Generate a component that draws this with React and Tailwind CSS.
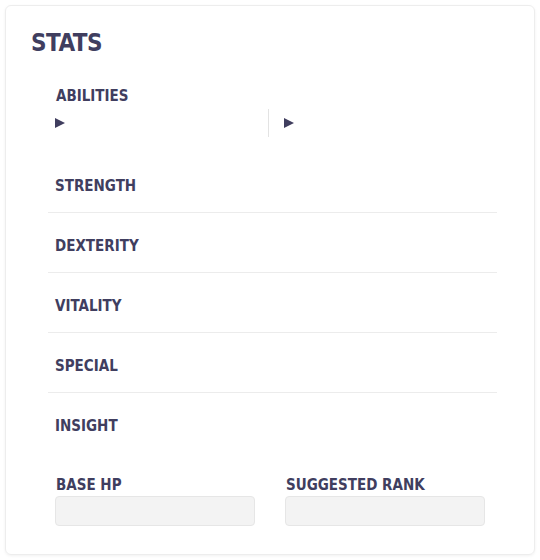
const stats = ["STRENGTH", "DEXTERITY", "VITALITY", "SPECIAL", "INSIGHT"];

function Caret() {
  return (
    <svg width="10" height="10" viewBox="0 0 10 10" className="block">
      <polygon points="0,0 10,5 0,10" fill="#403e5f" />
    </svg>
  );
}

export default function App() {
  const font = { fontFamily: '"DejaVu Sans Condensed", "DejaVu Sans", sans-serif' };
  return (
    <div className="w-[540px] h-[560px] bg-white p-[5px] text-[#403e5f]" style={font}>
      <div className="h-[550px] rounded-md border border-[#ededed] shadow-[0_1px_3px_rgba(0,0,0,0.06)] pl-[25px] pr-[25px] pt-[22px]">
        <h1 className="text-[24px] font-bold leading-[30px] tracking-[-0.5px]">STATS</h1>

        <div className="pl-[17px] pr-[12px] mt-[28px]">
          {/* abilities */}
          <div className="pl-[8px] text-[15px] font-bold leading-[20px]">ABILITIES</div>
          <div className="flex mt-[3px] h-[28px]">
            <div className="w-[221px] pl-[7px] flex items-center border-r border-[#e3e3e3]">
              <Caret />
            </div>
            <div className="pl-[15px] flex items-center">
              <Caret />
            </div>
          </div>

          {/* stat rows */}
          <div className="mt-[16px]">
            {stats.map((s, i) => (
              <div
                key={s}
                className={`h-[60px] pt-[23px] pl-[7px] text-[15px] font-bold leading-[20px] ${
                  i < stats.length - 1 ? "border-b border-[#ececec]" : ""
                }`}
              >
                {s}
              </div>
            ))}
          </div>

          {/* hp / rank */}
          <div className="flex gap-[30px] pl-[7px] mt-[24px]">
            <div className="w-[200px]">
              <div className="pl-[1px] text-[15px] font-bold leading-[17px]">BASE HP</div>
              <div className="mt-[2px] h-[30px] rounded-[4px] bg-[#f3f3f3] border border-[#e6e6e6]" />
            </div>
            <div className="w-[200px]">
              <div className="pl-[1px] text-[15px] font-bold leading-[17px]">SUGGESTED RANK</div>
              <div className="mt-[2px] h-[30px] rounded-[4px] bg-[#f3f3f3] border border-[#e6e6e6]" />
            </div>
          </div>
        </div>
      </div>
    </div>
  );
}
